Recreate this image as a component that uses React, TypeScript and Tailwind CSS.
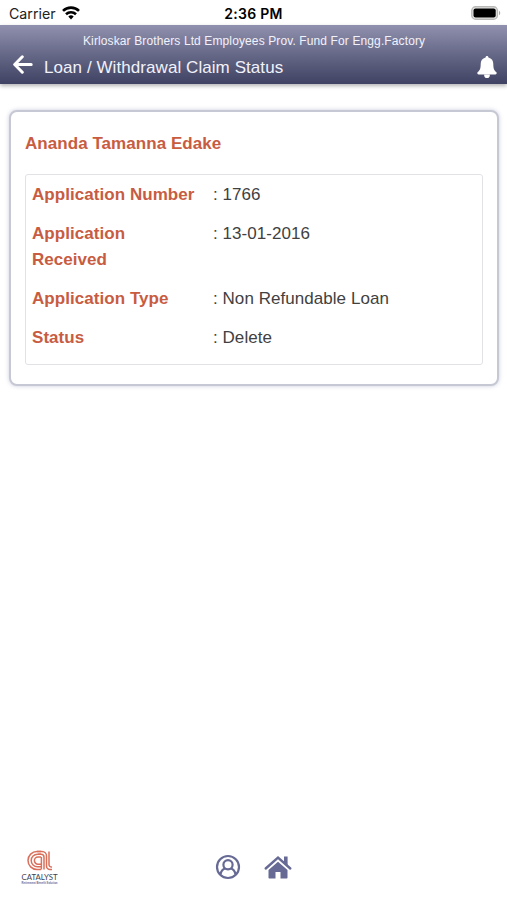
import React from "react";

const rows = [
  { label: "Application Number", value: ": 1766" },
  { label: "Application Received", value: ": 13-01-2016" },
  { label: "Application Type", value: ": Non Refundable Loan" },
  { label: "Status", value: ": Delete" },
];

function StatusBar() {
  return (
    <div className="grid h-[25px] grid-cols-3 items-center pt-[3px] font-['Inter',sans-serif] text-black">
      <div className="flex items-center gap-[6px] pl-[9px] text-[14.2px] leading-5 text-[#222]">
        <span>Carrier</span>
        <svg width="18" height="14" viewBox="0 0 18 14" fill="none" stroke="#000" strokeWidth="2.6" className="-mt-[2px]">
          <path d="M1 4.9a11.4 11.4 0 0 1 16 0" />
          <path d="M4 8.2a7.2 7.2 0 0 1 10 0" />
          <path d="M6.3 10.6a3.9 3.9 0 0 1 5.4 0L9 13.5z" fill="#000" stroke="none" />
        </svg>
      </div>
      <div className="text-center text-[14px] leading-5 font-semibold tracking-[0.25px]">2:36 PM</div>
      <div className="-mt-[2px] flex justify-end pr-[6px]">
        <svg width="30" height="14" viewBox="0 0 30 14">
          <rect x="0.8" y="0.8" width="25.6" height="12.4" rx="3.8" fill="#e8e8e6" stroke="#b9b9b7" strokeWidth="1.4" />
          <rect x="2.5" y="2.5" width="22.2" height="9" rx="2" fill="#000" />
          <path d="M28 4.8c1.7.7 1.7 3.7 0 4.4z" fill="#aaa" />
        </svg>
      </div>
    </div>
  );
}

function Header() {
  return (
    <header className="h-[59px] bg-linear-to-b from-[#9191af] to-[#3f4262] text-[#f1f2fb] shadow-[0_2px_4px_rgba(0,0,0,0.3)]">
      <div className="h-[27px] pt-[7px] pl-[83px] text-[12px] leading-[18px] tracking-[0.115px] whitespace-nowrap">
        Kirloskar Brothers Ltd Employees Prov. Fund For Engg.Factory
      </div>
      <div className="flex h-[30px] items-center pr-[10px] pl-[13px]">
        <svg width="20" height="19" viewBox="0 0 20 19" fill="none" stroke="#fff" strokeWidth="3" strokeLinecap="round" strokeLinejoin="round" className="-mt-[5px]">
          <path d="M9.3 1.8 1.7 9.5l7.6 7.7M2 9.5h16.2" />
        </svg>
        <h1 className="mt-[1px] ml-[11px] grow text-[17px] leading-[22px] tracking-[0.07px] whitespace-nowrap">Loan / Withdrawal Claim Status</h1>
        <svg width="20" height="22" viewBox="0 0 20 22" fill="#fff">
          <path d="M10 0c.9 0 1.4.6 1.4 1.6 3.3.8 4.900 3.200 4.900 6.400 0 4.600 1 6.500 2.900 8 .9.8.5 2.400-.8 2.400H1.600C.3 18.400-.1 16.800.8 16c1.900-1.500 2.900-3.400 2.900-8 0-3.200 1.600-5.600 4.900-6.400C8.600.6 9.100 0 10 0z" />
          <path d="M7.200 18.400h5.600v.8a2.800 2.800 0 0 1-5.600 0z" />
        </svg>
      </div>
    </header>
  );
}

function ClaimCard() {
  return (
    <section className="mr-[8px] ml-[9px] mt-[26px] h-[276px] rounded-[8px] border-2 border-[#c6c8d3] bg-white px-[14px] pt-[19px] shadow-[0_0_4px_rgba(125,130,175,0.4)]">
      <h2 className="h-[43px] text-[17px] leading-[26px] font-bold tracking-[0.05px] whitespace-nowrap text-[#c85c41]">Ananda Tamanna Edake</h2>
      <dl className="h-[191px] rounded-[3px] border border-[#e2e2e6] pl-[6px]">
        {rows.map((row) => (
          <div key={row.label} className="flex py-[6.5px] text-[17px] leading-[26px] tracking-[0.05px]">
            <dt className="w-[181px] pr-4 font-bold text-[#c85c41]">{row.label}</dt>
            <dd className="whitespace-nowrap text-[#414141]">{row.value}</dd>
          </div>
        ))}
      </dl>
    </section>
  );
}

function Logo() {
  return (
    <svg width="38" height="38" viewBox="0 0 38 38" className="overflow-visible">
      <g fill="none" stroke="#d9705c" strokeWidth="1.500">
        <path d="M20 1.500H16a8.500 8.500 0 0 0 0 18h4" />
        <path d="M20 4.200H16.500a6.300 6.300 0 0 0 0 12.600H20" />
        <path d="M20 7h-3a3.500 3.500 0 0 0 0 7.200h3" />
        <path d="M16 1.500h5a4.500 4.500 0 0 1 4.500 4.500v10a3.500 3.500 0 0 0 3.500 3.500h2" />
        <path d="M17 4.200h3a3 3 0 0 1 3 3v12.300M20.400 7v12.500M28 1.500v13a2.500 2.500 0 0 0 3 2.500" />
      </g>
      <text x="0.500" y="29.500" textLength="36" lengthAdjust="spacingAndGlyphs" fontSize="8" fontFamily="Lato, sans-serif" fill="#41414f">CATALYST</text>
      <text x="0.500" y="34" textLength="36" lengthAdjust="spacingAndGlyphs" fontSize="3.600" fontWeight="bold" fontFamily="Liberation Sans, sans-serif" fill="#67679a">Retirement Benefit Solution</text>
    </svg>
  );
}

function BottomBar() {
  return (
    <footer className="mt-auto flex h-[54px] items-start pl-[21px]">
      <div className="w-[194px] pt-[4px]"><Logo /></div>
      <svg width="26" height="26" viewBox="0 0 26 26" fill="none" stroke="#666a94" strokeWidth="2.200" className="mt-[8px]">
        <circle cx="13" cy="13" r="11" />
        <circle cx="13" cy="10.700" r="4.600" />
        <path d="M5.500 20.500c.5-3.600 2.200-5.400 4.900-6M20.500 20.500c-.5-3.600-2.200-5.400-4.900-6" />
      </svg>
      <svg width="28" height="24" viewBox="0 0 28 24" className="mt-[9px] ml-[23px]" fill="#666a94">
        <path d="M14 6.800 4.500 15v7.500c0 .6.400 1 1 1h6V17h5v6.500h6c.6 0 1-.4 1-1V15z" />
        <path d="m1.700 13.500 12.300-11 12.300 11" fill="none" stroke="#666a94" strokeWidth="2.400" strokeLinecap="round" />
        <path d="M20 1.500h3.600v9L20 7z" />
      </svg>
    </footer>
  );
}

export default function App() {
  return (
    <main className="flex h-[900px] w-[507px] flex-col overflow-hidden bg-white font-['Liberation_Sans',Arial,sans-serif]">
      <StatusBar />
      <Header />
      <ClaimCard />
      <BottomBar />
    </main>
  );
}
